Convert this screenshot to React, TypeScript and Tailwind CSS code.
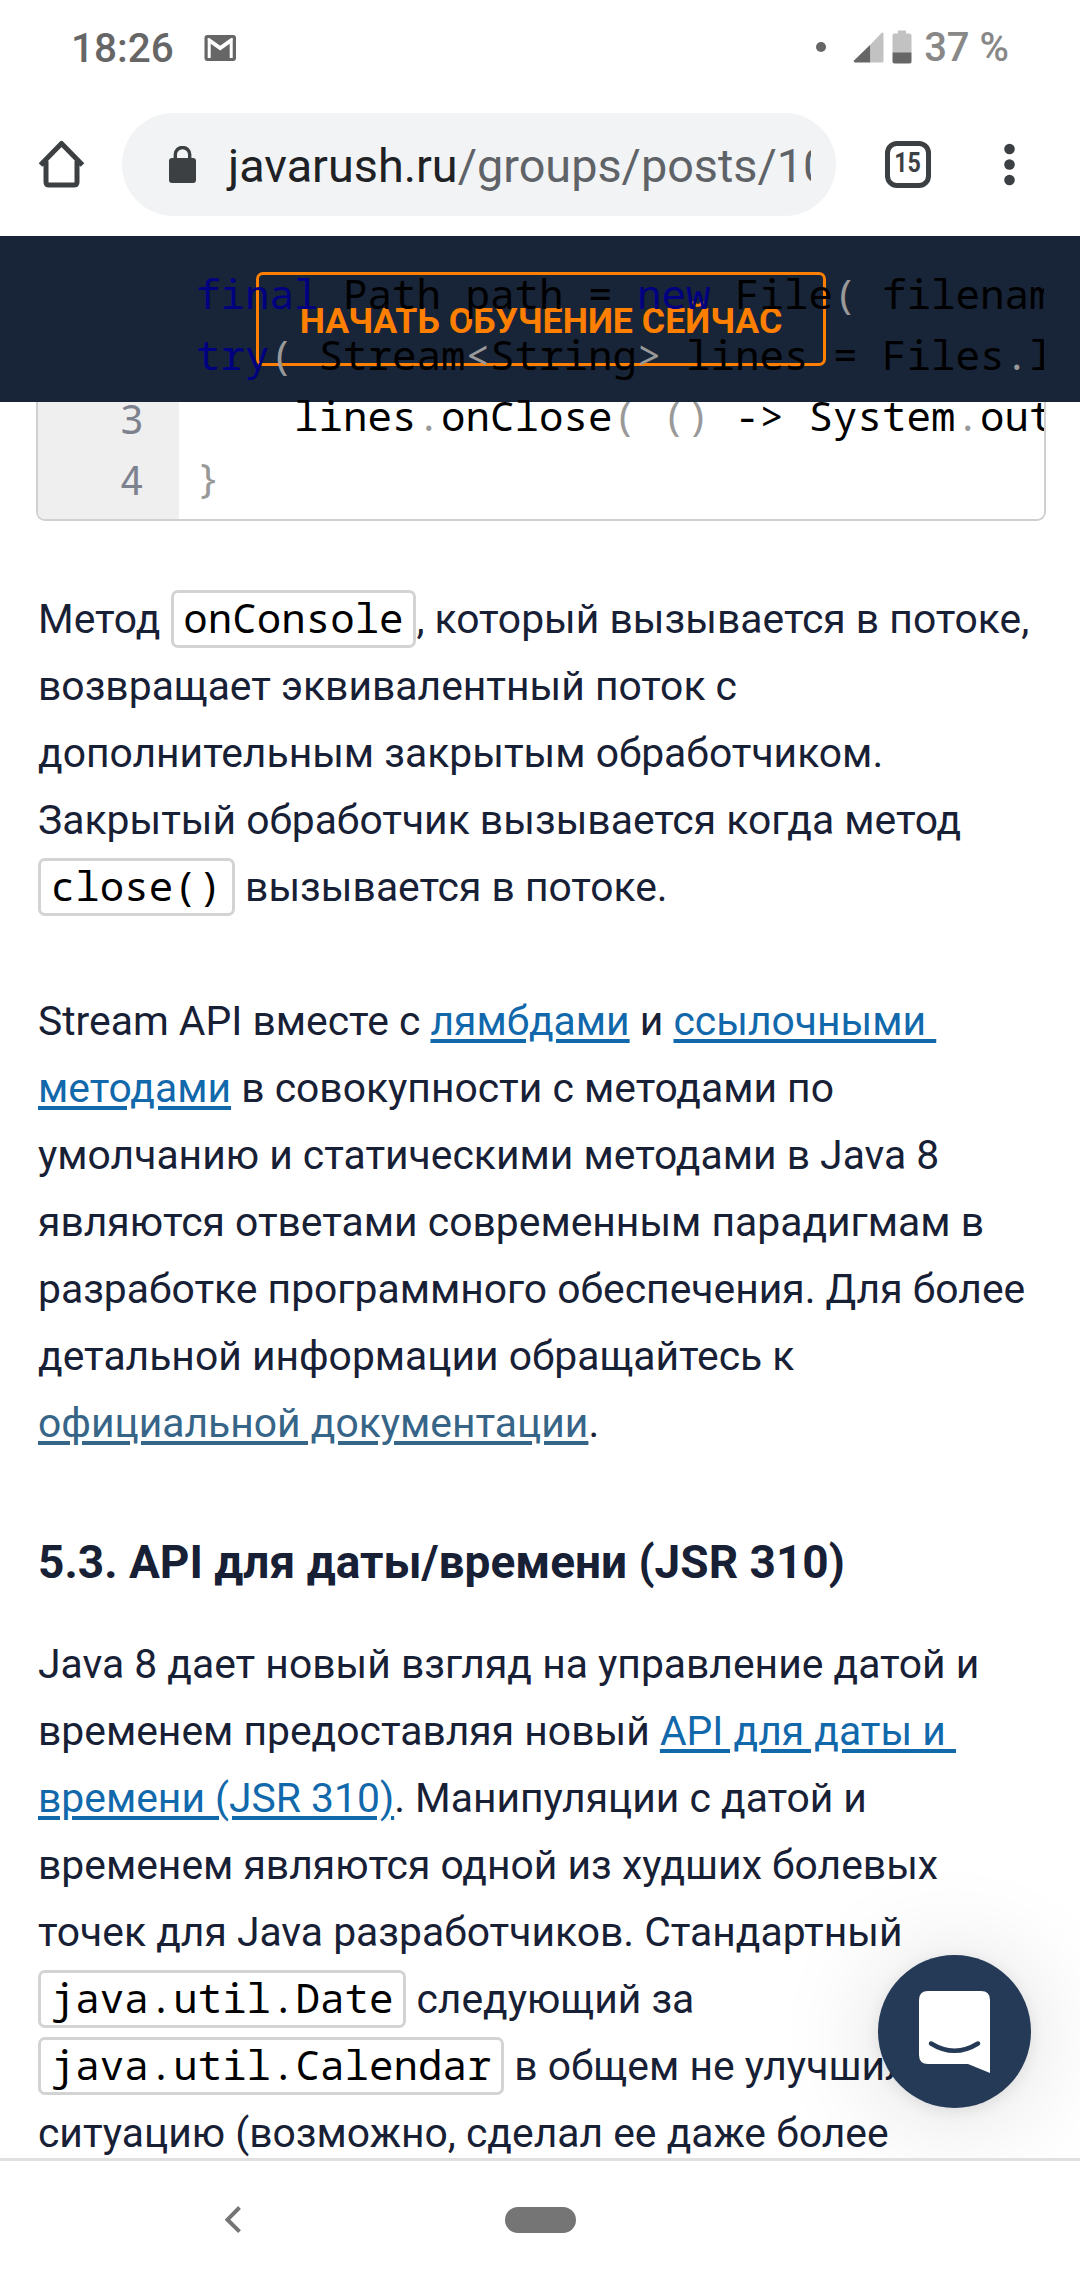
import type { ReactNode } from "react";

const MONO = "font-['Droid_Sans_Mono','Noto_Sans_Mono','DejaVu_Sans_Mono',monospace]";

function Line({ children }: { children?: ReactNode }) {
  return <div className="h-[67px] whitespace-pre leading-[67px]">{children}</div>;
}

function Code({ children }: { children: ReactNode }) {
  return (
    <code
      className={`${MONO} inline-block h-[58px] rounded-[7px] border-[3px] border-[#d3d3d3] px-[9.8px] text-[40.8px] leading-[49px] text-black`}
    >
      {children}
    </code>
  );
}

function Link({ children, visited }: { children: ReactNode; visited?: boolean }) {
  return (
    <a
      className={`underline decoration-[4px] underline-offset-[4px] ${visited ? "text-[#376587]" : "text-[#1168ab]"}`}
    >
      {children}
    </a>
  );
}

function K({ children }: { children: ReactNode }) {
  return <span className="text-[#000080]">{children}</span>;
}
function P({ children }: { children: ReactNode }) {
  return <span className="text-[#999999]">{children}</span>;
}

function StatusBar() {
  return (
    <div className="flex h-[96px] items-center pl-[71px] pr-[71px] text-[40.5px] leading-none text-[#666]">
      <span className="font-medium">18:26</span>
      <svg className="ml-[30px]" width="33" height="27" viewBox="0 0 33 27">
        <rect x="0.5" y="0" width="31.5" height="26" rx="3" fill="#666" />
        <path d="M5.2 23V5.7L16.2 13.7L27.2 5.7V23" fill="none" stroke="#fff" strokeWidth="3" />
        <path d="M4.2 3.9L16.2 12.3L28.2 3.9" fill="none" stroke="#fff" strokeWidth="2.6" />
      </svg>
      <span className="mb-[3px] ml-auto size-[10px] rounded-full bg-[#666]" />
      <svg className="mb-[2px] ml-[27px]" width="59" height="34" viewBox="0 0 59 34">
        <path d="M17.5 14.5V32.5H2Q0 32 1 30.5Z" fill="#666" />
        <path d="M17.5 32.5V14.5L28.5 3Q30.5 1.500 30.500 4V31Q30.500 32.500 29 32.500Z" fill="#c2c2c2" />
        <path d="M39.500 23V5.500Q39.500 3.500 41.500 3.500H45V.5H53V3.500H56Q58.500 3.500 58.500 5.500V23Z" fill="#c2c2c2" />
        <path d="M39.500 22.500H58.500V31.500Q58.500 33.500 56.500 33.500H41.500Q39.500 33.500 39.500 31.500Z" fill="#666" />
      </svg>
      <span className="ml-[12px] text-[40px] font-medium text-[#888]">37 %</span>
    </div>
  );
}

function BrowserBar() {
  return (
    <div className="flex h-[140px] pt-[17px] text-[#3c4043]">
      <svg width="122" height="103" viewBox="0 0 122 103">
        <path
          d="M40.500 52L61.500 30.500L82.500 52M46 48V69Q46 72 49 72H74Q77 72 77 69V48"
          fill="none"
          stroke="#3c4043"
          strokeWidth="5"
          strokeLinejoin="round"
        />
      </svg>
      <div className="flex h-[103px] w-[714px] items-center rounded-full bg-[#f1f3f4] pl-[47px]">
        <svg width="27" height="37" viewBox="0 0 27 37" className="shrink-0">
          <rect x="0" y="12" width="27" height="25" rx="3" fill="#3c4043" />
          <path d="M6.300 14V8.500a7.200 7 0 0 1 14.400 0V14" fill="none" stroke="#3c4043" strokeWidth="3.400" />
        </svg>
        <div className="ml-[30px] w-[585px] overflow-hidden whitespace-nowrap pl-[2px] pt-[2px] text-[46.800px] leading-[60px] text-[#5f6368]">
          <span className="text-[#202124]">javarush.ru</span>/groups/posts/1033
        </div>
      </div>
      <div className="ml-[48.500px] mt-[28px] flex h-[47px] w-[46px] items-center justify-center rounded-[12px] border-[5px] border-[#3c4043] pb-[3px] text-[27px] font-bold leading-none">
        <span className="scale-x-[0.86]">15</span>
      </div>
      <svg className="ml-[71px]" width="14" height="103" viewBox="0 0 14 103">
        <circle cx="7.500" cy="36" r="5.300" fill="#3c4043" />
        <circle cx="7.500" cy="51.500" r="5.300" fill="#3c4043" />
        <circle cx="7.500" cy="67" r="5.300" fill="#3c4043" />
      </svg>
    </div>
  );
}

function CodeSection() {
  return (
    <section className="relative h-[285px] pl-[36px] pr-[34px]">
      <div className={`${MONO} flex h-[285px] rounded-b-[9px] border-2 border-t-0 border-[#d0d0d0] text-[40.850px] leading-[61px]`}>
        <div className="w-[141px] rounded-bl-[7px] bg-[#efefef] pr-[35px] pt-[30px] text-right text-[#7d828e]">
          <div>1</div>
          <div>2</div>
          <div>3</div>
          <div>4</div>
        </div>
        <pre className={`${MONO} relative z-20 flex-1 overflow-hidden pl-[17px] pt-[27px] text-black`}>
          <div>
            <K>final</K> Path path = <K>new</K> File<P>(</P> filename <P>)</P>
          </div>
          <div>
            <K>try</K>
            <P>(</P> Stream<P>&lt;</P>String<P>&gt;</P> lines = Files<P>.</P>lines
          </div>
          <div>
            {"    "}lines<P>.</P>onClose<P>{"( ()"}</P> -&gt; System<P>.</P>out
          </div>
          <div className="pt-px">
            <P>{"}"}</P>
          </div>
        </pre>
      </div>
      <header className="absolute inset-x-0 top-0 z-10 flex h-[166px] justify-center bg-[#182437] pl-[2px] pt-[36px]">
        <button className="h-[94px] w-[570px] whitespace-nowrap rounded-[7px] border-[3px] border-[#ff7f00] pt-[2px] text-[35.700px] font-bold leading-[88px] text-[#ff7f00]">
          НАЧАТЬ ОБУЧЕНИЕ СЕЙЧАС
        </button>
      </header>
    </section>
  );
}

function ChatLauncher() {
  return (
    <div className="absolute left-[878px] top-[1955px] flex size-[153px] items-center justify-center rounded-full bg-[#253a57] shadow-[0_3px_16px_rgba(0,0,0,0.09),0_6px_110px_rgba(0,0,0,0.14)]">
      <svg width="71" height="82" viewBox="0 0 71 82">
        <path d="M9 0H62Q71 0 71 9V82L49 73H9Q0 73 0 64V9Q0 0 9 0Z" fill="#fff" />
        <path d="M12 52.500Q35.500 67 59 52.500" fill="none" stroke="#253a57" strokeWidth="4.500" strokeLinecap="round" />
      </svg>
    </div>
  );
}

export default function App() {
  return (
    <div className="relative flex h-[2280px] w-[1080px] flex-col overflow-hidden bg-white font-[Roboto,sans-serif]">
      <StatusBar />
      <BrowserBar />
      <div className="relative h-[1922px] shrink-0">
        <CodeSection />
        <main className="px-[38px] pt-[65px] text-[40.850px] text-[#172035]">
          <Line>
            Метод <Code>onConsole</Code>, который вызывается в потоке,
          </Line>
          <Line>возвращает эквивалентный поток с</Line>
          <Line>дополнительным закрытым обработчиком.</Line>
          <Line>Закрытый обработчик вызывается когда метод</Line>
          <Line>
            <Code>close()</Code> вызывается в потоке.
          </Line>
          <Line />
          <Line>
            Stream API вместе с <Link>лямбдами</Link> и <Link>ссылочными </Link>
          </Line>
          <Line>
            <Link>методами</Link> в совокупности с методами по
          </Line>
          <Line>умолчанию и статическими методами в Java 8</Line>
          <Line>являются ответами современным парадигмам в</Line>
          <Line>разработке программного обеспечения. Для более</Line>
          <Line>детальной информации обращайтесь к</Line>
          <Line>
            <Link visited>официальной документации</Link>.
          </Line>
          <h2 className="mb-[34px] mt-[71px] h-[69px] whitespace-nowrap text-[46px] font-bold leading-[69px]">
            5.3. API для даты/времени (JSR 310)
          </h2>
          <Line>Java 8 дает новый взгляд на управление датой и</Line>
          <Line>
            временем предоставляя новый <Link>API для даты и </Link>
          </Line>
          <Line>
            <Link>времени (JSR 310)</Link>. Манипуляции с датой и
          </Line>
          <Line>временем являются одной из худших болевых</Line>
          <Line>точек для Java разработчиков. Стандартный</Line>
          <Line>
            <Code>java.util.Date</Code> следующий за
          </Line>
          <Line>
            <Code>java.util.Calendar</Code> в общем не улучшил
          </Line>
          <Line>ситуацию (возможно, сделал ее даже более</Line>
        </main>
      </div>
      <ChatLauncher />
      <nav className="relative flex h-[122px] shrink-0 border-t-[3px] border-[#e0e0e0] bg-white pl-[224px]">
        <svg width="281" height="119" viewBox="0 0 281 119">
          <path d="M15.500 46.500L3.500 58.700L15.500 70.700" fill="none" stroke="#757575" strokeWidth="4" />
        </svg>
        <div className="mt-[46px] h-[26px] w-[71px] rounded-full bg-[#757575]" />
      </nav>
    </div>
  );
}
